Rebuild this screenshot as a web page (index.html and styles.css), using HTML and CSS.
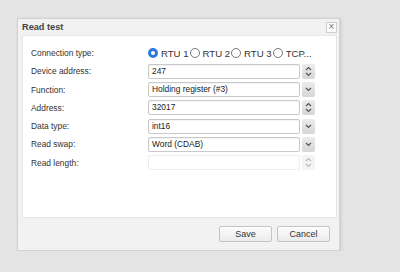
FILE: index.html
```html
<!DOCTYPE html>
<html>
  <head>
    <meta charset="UTF-8" />
    <title>Read test</title>
    <link rel="stylesheet" href="styles.css">
  </head>
  <body>
    <div class="dialog">
      <div class="dialog-title">
        <span>Read test</span>
        <span class="close">&times;</span>
      </div>

      <div class="dialog-body">
        <div class="row">
          <div class="label">Connection type:</div>
          <div class="radios">
            <label class="radio checked"><span class="dot"></span>RTU 1</label>
            <label class="radio"><span class="dot"></span>RTU 2</label>
            <label class="radio"><span class="dot"></span>RTU 3</label>
            <label class="radio"><span class="dot"></span>TCP...</label>
          </div>
        </div>

        <div class="row">
          <div class="label">Device address:</div>
          <div class="field">
            <div class="input">247</div>
            <div class="btn spin">
              <svg width="7" height="11" viewBox="0 0 7 11"><polyline points="1,4 3.5,1.5 6,4" /><polyline points="1,7 3.5,9.5 6,7" /></svg>
            </div>
          </div>
        </div>

        <div class="row">
          <div class="label">Function:</div>
          <div class="field">
            <div class="input">Holding register (#3)</div>
            <div class="btn drop">
              <svg width="7" height="5" viewBox="0 0 7 5"><polyline points="1,1 3.5,3.5 6,1" /></svg>
            </div>
          </div>
        </div>

        <div class="row">
          <div class="label">Address:</div>
          <div class="field">
            <div class="input">32017</div>
            <div class="btn spin">
              <svg width="7" height="11" viewBox="0 0 7 11"><polyline points="1,4 3.5,1.5 6,4" /><polyline points="1,7 3.5,9.5 6,7" /></svg>
            </div>
          </div>
        </div>

        <div class="row">
          <div class="label">Data type:</div>
          <div class="field">
            <div class="input">int16</div>
            <div class="btn drop">
              <svg width="7" height="5" viewBox="0 0 7 5"><polyline points="1,1 3.5,3.5 6,1" /></svg>
            </div>
          </div>
        </div>

        <div class="row">
          <div class="label">Read swap:</div>
          <div class="field">
            <div class="input">Word (CDAB)</div>
            <div class="btn drop">
              <svg width="7" height="5" viewBox="0 0 7 5"><polyline points="1,1 3.5,3.5 6,1" /></svg>
            </div>
          </div>
        </div>

        <div class="row">
          <div class="label">Read length:</div>
          <div class="field disabled">
            <div class="input"></div>
            <div class="btn spin">
              <svg width="7" height="11" viewBox="0 0 7 11"><polyline points="1,4 3.5,1.5 6,4" /><polyline points="1,7 3.5,9.5 6,7" /></svg>
            </div>
          </div>
        </div>
      </div>

      <div class="dialog-actions">
        <button>Save</button>
        <button>Cancel</button>
      </div>
    </div>
  </body>
</html>
```
FILE: styles.css
```css
body {
  margin: 0;
  background-color: #e4e4e4;
  font-family: "Liberation Sans", Arial, sans-serif;
  color: #333;
}

.dialog {
  margin: 18px 0 0 17px;
  width: 321px;
  height: 231px;
  border: 1px solid #d2d2d2;
  background-color: #f2f2f2;
  box-shadow: 1px 1px 3px rgba(0, 0, 0, 0.12);
  display: flex;
  flex-direction: column;
}

.dialog-title {
  height: 16px;
  padding: 0 2px 0 4px;
  display: flex;
  align-items: center;
  justify-content: space-between;
  font-size: 9.2px;
  font-weight: bold;
  color: #444;
}

.close {
  width: 9px;
  height: 9px;
  border: 1px solid #cfcfcf;
  background-color: #fafafa;
  font-size: 10px;
  line-height: 8px;
  text-align: center;
  color: #777;
  font-weight: normal;
}

.dialog-body {
  margin: 0 2px 0 4px;
  height: 172px;
  padding: 9px 21px 0 8px;
  background-color: #fff;
  border: 1px solid #e6e6e6;
  display: flex;
  flex-direction: column;
  gap: 2.3px;
}

.row {
  height: 16px;
  display: grid;
  grid-template-columns: 117px 1fr;
  align-items: center;
  font-size: 8.4px;
}

.radios {
  display: flex;
  align-items: center;
}

.radio {
  display: flex;
  align-items: center;
  margin-right: 1px;
  font-size: 9.6px;
  color: #333;
}

.dot {
  width: 8px;
  height: 8px;
  border: 1px solid #777;
  border-radius: 50%;
  margin-right: 3px;
  background-color: #fff;
}

.radio.checked .dot {
  width: 4px;
  height: 4px;
  border: 3px solid #2b78de;
}

.field {
  display: flex;
  gap: 2px;
  height: 15px;
}

.input {
  flex: 1;
  border: 1px solid #c9c9c9;
  border-radius: 2px;
  padding: 0 3px;
  line-height: 13px;
  color: #222;
  box-shadow: inset 0 1px 1px rgba(0, 0, 0, 0.05);
}

.btn {
  width: 13px;
  border-radius: 2px;
  background: linear-gradient(#ececec, #d6d6d6);
  display: flex;
  align-items: center;
  justify-content: center;
}

.btn svg polyline {
  fill: none;
  stroke: #555;
  stroke-width: 1.2;
}

.disabled .input {
  border-color: #eee;
  box-shadow: none;
}

.disabled .btn {
  background: #f4f4f4;
}

.disabled .btn svg polyline {
  stroke: #bbb;
}

.dialog-actions {
  flex: 1;
  display: flex;
  align-items: center;
  justify-content: flex-end;
  gap: 5px;
  padding-right: 9px;
}

button {
  width: 53px;
  height: 16px;
  padding: 0;
  border: 1px solid #c4c4c4;
  border-radius: 2px;
  background: linear-gradient(#fdfdfd, #ebebeb);
  font-family: "Liberation Sans", Arial, sans-serif;
  font-size: 9px;
  color: #333;
}
```
